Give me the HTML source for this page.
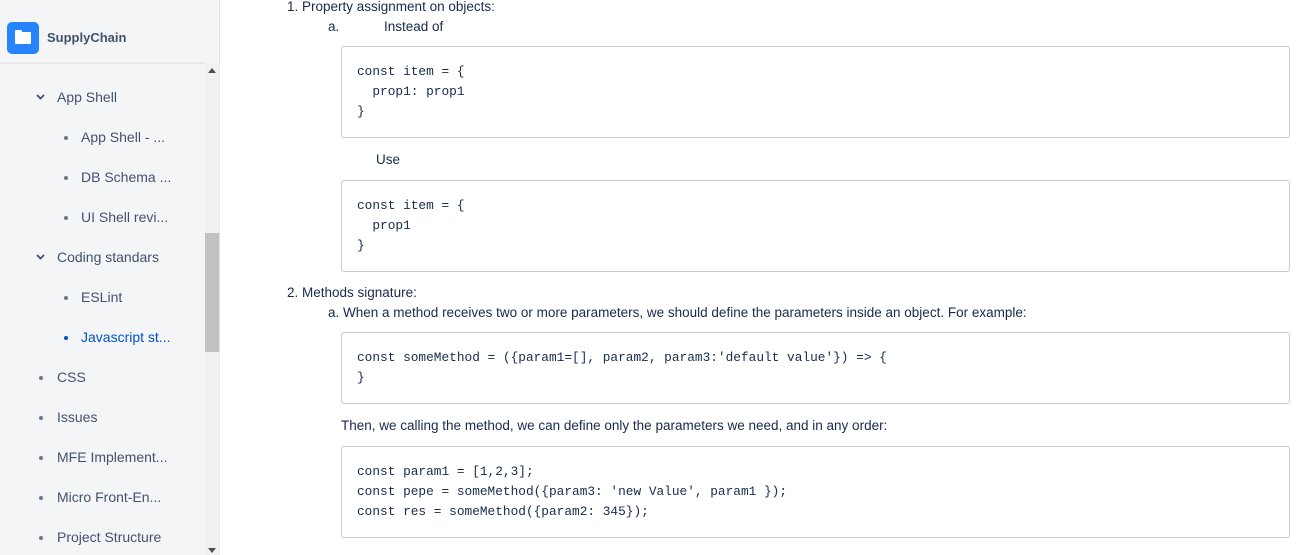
<!DOCTYPE html>
<html><head><meta charset="utf-8"><style>
*{margin:0;padding:0;box-sizing:border-box}
body{width:1316px;height:555px;overflow:hidden;background:#fff;font-family:"Liberation Sans",sans-serif;font-size:13.5px;color:#172b4d;position:relative}
.side{position:absolute;left:0;top:0;width:220px;height:555px;background:#f4f5f7;border-right:1px solid #e4e5e8}
.logo{position:absolute;left:7px;top:22px;width:32px;height:32px;background:#2684ff;border-radius:5px}
.logo i{position:absolute;left:8px;top:10px;width:16px;height:12px;background:#fff;border-radius:1px}
.logo i:before{content:"";position:absolute;left:0;top:-2px;width:7px;height:3px;background:#fff;border-radius:1px 1px 0 0}
.brand{position:absolute;left:47px;top:30px;font-weight:bold;font-size:13px;color:#42526e}
.sep{position:absolute;left:0;top:62px;width:205px;height:2px;background:#e6e8eb}
.sb{position:absolute;left:205px;top:64px;width:14px;height:491px;background:#f1f1f1}
.thumb{position:absolute;left:205px;top:233px;width:14px;height:119px;background:#c1c1c1}
.it{position:absolute;font-size:14px;color:#42526e;white-space:nowrap}
.blt{position:absolute;width:4px;height:4px;border-radius:2px;background:#6b778c}
.t{position:absolute;white-space:nowrap;color:#172b4d}
.code{position:absolute;left:341px;width:949px;border:1px solid #ccc;border-radius:3px;font-family:"Liberation Mono",monospace;font-size:12.8px;line-height:20px;padding:15px 15px 13px;white-space:pre;color:#172b4d}
</style></head><body>
<div class="side">
<div class="logo"><i></i></div>
<div class="brand">SupplyChain</div>
<div class="sep"></div>
</div>
<div class="sb"></div><div class="thumb"></div>
<svg style="position:absolute;left:208px;top:68px" width="8" height="5"><path d="M0 5L4 0L8 5Z" fill="#505050"/></svg>
<svg style="position:absolute;left:208px;top:548px" width="8" height="5"><path d="M0 0L4 5L8 0Z" fill="#505050"/></svg>
<svg style="position:absolute;left:36px;top:94px" width="9" height="6"><path d="M1 1L4.5 4.5L8 1" stroke="#42526e" stroke-width="1.8" fill="none"/></svg>
<div class="it" style="left:57px;top:89px">App Shell</div>
<div class="blt" style="left:64px;top:136px"></div><div class="it" style="left:81px;top:129px">App Shell - ...</div>
<div class="blt" style="left:64px;top:176px"></div><div class="it" style="left:81px;top:169px">DB Schema ...</div>
<div class="blt" style="left:64px;top:216px"></div><div class="it" style="left:81px;top:209px">UI Shell revi...</div>
<svg style="position:absolute;left:36px;top:254px" width="9" height="6"><path d="M1 1L4.5 4.5L8 1" stroke="#42526e" stroke-width="1.8" fill="none"/></svg>
<div class="it" style="left:57px;top:249px">Coding standars</div>
<div class="blt" style="left:64px;top:296px"></div><div class="it" style="left:81px;top:289px">ESLint</div>
<div class="blt" style="left:64px;top:336px;background:#0052cc"></div><div class="it" style="left:81px;top:329px;color:#0052cc">Javascript st...</div>
<div class="blt" style="left:39px;top:376px"></div><div class="it" style="left:57px;top:369px">CSS</div>
<div class="blt" style="left:39px;top:416px"></div><div class="it" style="left:57px;top:409px">Issues</div>
<div class="blt" style="left:39px;top:456px"></div><div class="it" style="left:57px;top:449px">MFE Implement...</div>
<div class="blt" style="left:39px;top:496px"></div><div class="it" style="left:57px;top:489px">Micro Front-En...</div>
<div class="blt" style="left:39px;top:536px"></div><div class="it" style="left:57px;top:529px">Project Structure</div>

<div class="t" style="left:287px;top:-1px">1. Property assignment on objects:</div>
<div class="t" style="left:328px;top:19px">a.</div>
<div class="t" style="left:384px;top:19px">Instead of</div>
<div class="code" style="top:46px;height:92px">const item = {
  prop1: prop1
}</div>
<div class="t" style="left:376px;top:152px">Use</div>
<div class="code" style="top:180px;height:92px">const item = {
  prop1
}</div>
<div class="t" style="left:287px;top:285px">2. Methods signature:</div>
<div class="t" style="left:328px;top:305px">a. When a method receives two or more parameters, we should define the parameters inside an object. For example:</div>
<div class="code" style="top:332px;height:72px">const someMethod = ({param1=[], param2, param3:'default value'}) => {
}</div>
<div class="t" style="left:341px;top:418px">Then, we calling the method, we can define only the parameters we need, and in any order:</div>
<div class="code" style="top:446px;height:92px">const param1 = [1,2,3];
const pepe = someMethod({param3: 'new Value', param1 });
const res = someMethod({param2: 345});</div>
</body></html>
